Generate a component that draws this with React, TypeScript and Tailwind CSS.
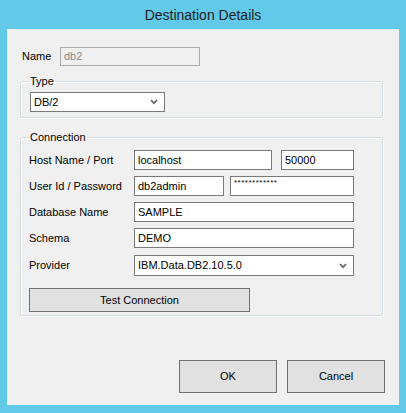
import React from 'react'

const font = { fontFamily: '"Liberation Sans", Arial, sans-serif' }

function Chevron() {
  return (
    <svg width="8" height="6" viewBox="0 0 8 6" className="shrink-0">
      <path d="M1 1.2 L4 4.2 L7 1.2" fill="none" stroke="#6a6a6a" strokeWidth="1.7" />
    </svg>
  )
}

function Field({ value, className = '' }: { value: string; className?: string }) {
  return (
    <div className={`flex h-[20px] items-center border border-[#7a7a7a] bg-white pl-[3px] text-[11px] text-black ${className}`}>
      {value}
    </div>
  )
}

function Combo({ value, className = '' }: { value: string; className?: string }) {
  return (
    <div className={`flex items-center justify-between border border-[#7a7a7a] bg-white pl-[3px] pr-[6px] text-[11px] text-black ${className}`}>
      <span>{value}</span>
      <Chevron />
    </div>
  )
}

function Row({ label, children }: { label: string; children: React.ReactNode }) {
  return (
    <div className="flex items-center">
      <span className="w-[105px] shrink-0 text-[11px] text-black">{label}</span>
      {children}
    </div>
  )
}

export default function App() {
  return (
    <div className="flex h-[413px] w-[406px] flex-col bg-[#62c9e9]" style={font}>
      {/* Title bar */}
      <div className="flex h-[29px] items-center justify-center pt-[1px] text-[14px] text-[#1e1e1e]">
        Destination Details
      </div>

      {/* Client area */}
      <div className="mx-[7px] mb-[8px] flex flex-1 flex-col bg-[#f0f0f0]">
        {/* Name */}
        <div className="mt-[18px] flex items-center pl-[15px]">
          <span className="w-[38px] text-[11px] text-black">Name</span>
          <div className="flex h-[19px] w-[140px] items-center border border-[#acacac] pl-[3px] text-[11px] text-[#8a8a8a]">
            db2
          </div>
        </div>

        {/* Type group */}
        <fieldset className="ml-[13px] mt-[8px] w-[363px] rounded-[2px] border border-[#d5dfe5] px-[9px] pb-[5px] pt-[4px] shadow-[inset_1px_1px_0_#ffffff,1px_1px_0_#ffffff]">
          <legend className="ml-[-1px] h-[14px] px-[1px] text-[11px] leading-[14px] text-black">Type</legend>
          <Combo value="DB/2" className="h-[20px] w-[135px]" />
        </fieldset>

        {/* Connection group */}
        <fieldset className="ml-[13px] mt-[12px] w-[363px] rounded-[2px] border border-[#d5dfe5] pb-[3px] pl-[8px] pt-[6px] shadow-[inset_1px_1px_0_#ffffff,1px_1px_0_#ffffff]">
          <legend className="h-[14px] px-[1px] text-[11px] leading-[14px] text-black">Connection</legend>
          <div className="flex flex-col gap-[6px]">
            <Row label="Host Name / Port">
              <Field value="localhost" className="w-[138px]" />
              <Field value="50000" className="ml-[9px] w-[73px]" />
            </Row>
            <Row label="User Id / Password">
              <Field value="db2admin" className="w-[90px]" />
              <div className="ml-[6px] flex h-[20px] w-[124px] items-start border border-[#7a7a7a] bg-white pl-[3px] pt-[1px] text-[8px] leading-[10px] tracking-[0.5px] text-black">
                ************
              </div>
            </Row>
            <Row label="Database Name">
              <Field value="SAMPLE" className="w-[220px]" />
            </Row>
            <Row label="Schema">
              <Field value="DEMO" className="w-[220px]" />
            </Row>
            <Row label="Provider">
              <Combo value="IBM.Data.DB2.10.5.0" className="mt-[1px] h-[21px] w-[220px]" />
            </Row>
          </div>
          <button className="mt-[12px] flex h-[24px] w-[221px] items-center justify-center border border-[#707070] bg-[#e1e1e1] text-[11px] text-black">
            Test Connection
          </button>
        </fieldset>

        {/* Footer buttons */}
        <div className="mt-auto mb-[12px] mr-[14px] flex justify-end gap-[10px]">
          <button className="h-[33px] w-[98px] border border-[#707070] bg-[#e1e1e1] text-[11px] text-black">OK</button>
          <button className="h-[33px] w-[98px] border border-[#707070] bg-[#e1e1e1] text-[11px] text-black">Cancel</button>
        </div>
      </div>
    </div>
  )
}
